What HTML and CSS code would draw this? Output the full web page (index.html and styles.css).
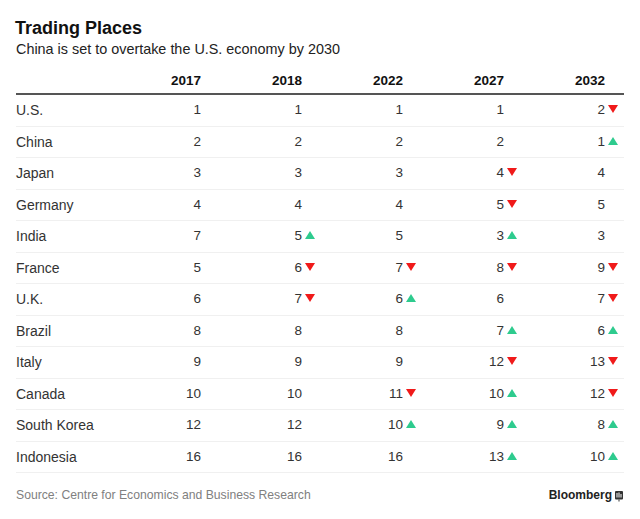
FILE: index.html
```html
<!DOCTYPE html>
<html lang="en">
<head>
<meta charset="utf-8">
<title>Trading Places</title>
<link rel="stylesheet" href="styles.css">
</head>
<body>
<div class="chart">
  <h1 class="title">Trading Places</h1>
  <p class="subtitle">China is set to overtake the U.S. economy by 2030</p>
  <div class="table">
    <div class="row head">
      <span class="label"></span>
      <span class="cell">2017</span>
      <span class="cell">2018</span>
      <span class="cell">2022</span>
      <span class="cell">2027</span>
      <span class="cell">2032</span>
    </div>
    <div class="row">
      <span class="label">U.S.</span>
      <span class="cell">1</span><span class="cell">1</span><span class="cell">1</span><span class="cell">1</span>
      <span class="cell">2<i class="arr down"></i></span>
    </div>
    <div class="row">
      <span class="label">China</span>
      <span class="cell">2</span><span class="cell">2</span><span class="cell">2</span><span class="cell">2</span>
      <span class="cell">1<i class="arr up"></i></span>
    </div>
    <div class="row">
      <span class="label">Japan</span>
      <span class="cell">3</span><span class="cell">3</span><span class="cell">3</span>
      <span class="cell">4<i class="arr down"></i></span>
      <span class="cell">4</span>
    </div>
    <div class="row">
      <span class="label">Germany</span>
      <span class="cell">4</span><span class="cell">4</span><span class="cell">4</span>
      <span class="cell">5<i class="arr down"></i></span>
      <span class="cell">5</span>
    </div>
    <div class="row">
      <span class="label">India</span>
      <span class="cell">7</span>
      <span class="cell">5<i class="arr up"></i></span>
      <span class="cell">5</span>
      <span class="cell">3<i class="arr up"></i></span>
      <span class="cell">3</span>
    </div>
    <div class="row">
      <span class="label">France</span>
      <span class="cell">5</span>
      <span class="cell">6<i class="arr down"></i></span>
      <span class="cell">7<i class="arr down"></i></span>
      <span class="cell">8<i class="arr down"></i></span>
      <span class="cell">9<i class="arr down"></i></span>
    </div>
    <div class="row">
      <span class="label">U.K.</span>
      <span class="cell">6</span>
      <span class="cell">7<i class="arr down"></i></span>
      <span class="cell">6<i class="arr up"></i></span>
      <span class="cell">6</span>
      <span class="cell">7<i class="arr down"></i></span>
    </div>
    <div class="row">
      <span class="label">Brazil</span>
      <span class="cell">8</span><span class="cell">8</span><span class="cell">8</span>
      <span class="cell">7<i class="arr up"></i></span>
      <span class="cell">6<i class="arr up"></i></span>
    </div>
    <div class="row">
      <span class="label">Italy</span>
      <span class="cell">9</span><span class="cell">9</span><span class="cell">9</span>
      <span class="cell">12<i class="arr down"></i></span>
      <span class="cell">13<i class="arr down"></i></span>
    </div>
    <div class="row">
      <span class="label">Canada</span>
      <span class="cell">10</span><span class="cell">10</span>
      <span class="cell">11<i class="arr down"></i></span>
      <span class="cell">10<i class="arr up"></i></span>
      <span class="cell">12<i class="arr down"></i></span>
    </div>
    <div class="row">
      <span class="label">South Korea</span>
      <span class="cell">12</span><span class="cell">12</span>
      <span class="cell">10<i class="arr up"></i></span>
      <span class="cell">9<i class="arr up"></i></span>
      <span class="cell">8<i class="arr up"></i></span>
    </div>
    <div class="row">
      <span class="label">Indonesia</span>
      <span class="cell">16</span><span class="cell">16</span><span class="cell">16</span>
      <span class="cell">13<i class="arr up"></i></span>
      <span class="cell">10<i class="arr up"></i></span>
    </div>
  </div>
  <div class="foot">
    <span class="source">Source: Centre for Economics and Business Research</span>
    <span class="brand">Bloomberg
      <svg class="logo" width="8" height="11" viewBox="0 0 8 11" aria-hidden="true">
        <rect x="0" y="0" width="8" height="8.5" rx="1" fill="#333"/>
        <rect x="3.5" y="8.5" width="1" height="2" fill="#333"/>
        <rect x="1.5" y="2" width="1" height="4.5" fill="#fff"/>
        <rect x="3.5" y="1.5" width="1" height="5" fill="#fff"/>
        <rect x="5.5" y="3" width="1" height="3.5" fill="#fff"/>
      </svg>
    </span>
  </div>
</div>
</body>
</html>
```
FILE: styles.css
```css
html, body {
  margin: 0;
  padding: 0;
  background: #fff;
}

.chart {
  width: 608px;
  padding: 0 16px;
  font-family: "Liberation Sans", Arial, sans-serif;
  color: #333;
}

.title {
  margin: 17px 0 0 -1px;
  font-size: 18px;
  line-height: 22px;
  font-weight: bold;
  color: #111;
}

.subtitle {
  margin: 1px 0 0;
  font-size: 14.4px;
  line-height: 18px;
  color: #222;
}

.row {
  display: grid;
  grid-template-columns: 103px repeat(5, 101px);
  height: 31.5px;
  box-sizing: border-box;
  border-bottom: 1px solid #f0f0f0;
  align-items: center;
}

.row.head {
  height: 37px;
  border-bottom: 2px solid #555;
  align-items: end;
  padding-bottom: 4px;
}

.label {
  font-size: 14px;
  line-height: 16px;
  color: #333;
}

.cell {
  text-align: right;
  padding-right: 19px;
  font-size: 13.5px;
  line-height: 16px;
  color: #333;
}

.head .cell {
  font-weight: bold;
  font-size: 13.5px;
  color: #111;
}

.arr {
  display: inline-block;
  width: 0;
  height: 0;
  margin-left: 3px;
  margin-right: -13px;
  border-left: 5px solid transparent;
  border-right: 5px solid transparent;
  vertical-align: 1px;
}

.arr.down {
  border-top: 8px solid #f01a1a;
}

.arr.up {
  border-bottom: 8px solid #2ecb8e;
}

.foot {
  display: flex;
  justify-content: space-between;
  align-items: center;
  padding-top: 14px;
  line-height: 16px;
}

.source {
  font-size: 12.2px;
  color: #808080;
}

.brand {
  display: flex;
  align-items: flex-start;
  gap: 3px;
  font-size: 12px;
  font-weight: bold;
  color: #222;
  margin-right: 1px;
}

.logo {
  margin-top: 4px;
}
```
